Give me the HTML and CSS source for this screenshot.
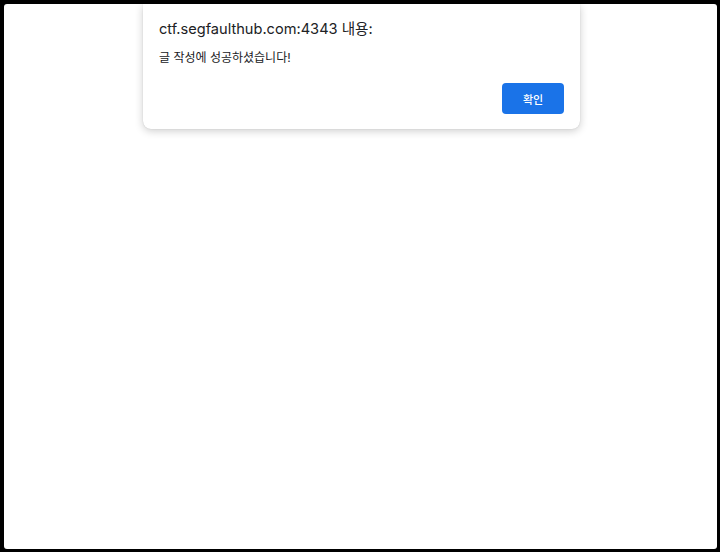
FILE: index.html
```html
<!DOCTYPE html>
<html lang="ko">
<head>
    <meta charset="utf-8">
    <title>ctf.segfaulthub.com</title>
    <link rel="stylesheet" href="styles.css">
</head>
<body>
    <div class="screen">
        <div class="page">
            <div class="alert-box">
                <p class="alert-title">ctf.segfaulthub.com:4343 내용:</p>
                <p class="alert-msg">글 작성에 성공하셨습니다!</p>
                <div class="alert-actions">
                    <button class="btn-ok">확인</button>
                </div>
            </div>
        </div>
    </div>
</body>
</html>
```

FILE: styles.css
```css
* {
    margin: 0;
    padding: 0;
    box-sizing: border-box;
}
html, body {
    width: 720px;
    height: 552px;
    background: #000;
    overflow: hidden;
}
body {
    font-family: Inter, "Noto Sans CJK KR", sans-serif;
    color: #202124;
}
.screen {
    width: 720px;
    height: 552px;
    padding: 4px 3px 3px 4px;
}
.page {
    height: 100%;
    background: #fff;
    border-radius: 3px;
}
.alert-box {
    width: 437px;
    margin-left: 139px;
    padding: 15px 16px 15px 16px;
    background: #fff;
    border-radius: 0 0 8px 8px;
    box-shadow: 0 2px 8px rgba(0, 0, 0, 0.2), 0 0 1px rgba(0, 0, 0, 0.2);
}
.alert-title {
    font-size: 14.6px;
    line-height: 20px;
    color: #202124;
}
.alert-msg {
    margin-top: 11px;
    font-size: 12px;
    line-height: 16px;
    color: #202124;
}
.alert-actions {
    display: flex;
    justify-content: flex-end;
    margin-top: 17px;
}
.btn-ok {
    width: 62px;
    height: 31px;
    border: 0;
    border-radius: 4px;
    background: #1a73e8;
    color: #fff;
    font-family: Inter, "Noto Sans CJK KR", sans-serif;
    font-size: 11px;
    font-weight: 500;
}
```
